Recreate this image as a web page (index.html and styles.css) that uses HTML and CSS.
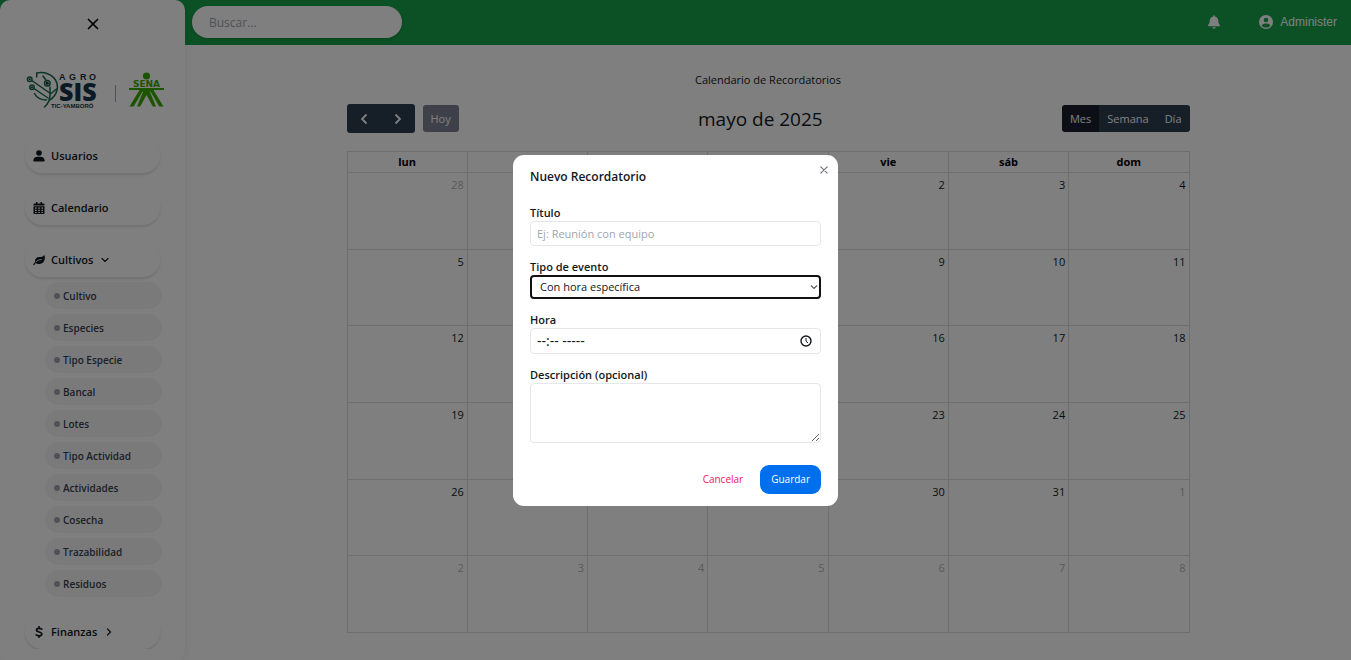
FILE: index.html
```html
<!DOCTYPE html>
<html lang="es">
<head>
<meta charset="utf-8">
<meta name="viewport" content="width=device-width, initial-scale=1">
<title>Calendario de Recordatorios</title>
<link rel="stylesheet" href="styles.css">
</head>
<body>
<div class="app">
  <header class="topbar">
    <input class="search" type="text" placeholder="Buscar..." aria-label="Buscar">
    <div class="account">
      <button class="icon-btn" type="button" aria-label="Notificaciones">
        <svg width="12" height="14" viewBox="0 0 448 512" fill="currentColor"><path d="M224 0c-17.700 0-32 14.300-32 32v19.200C119 66 64 130.600 64 208v18.800c0 47-17.300 92.400-48.500 127.600l-7.400 8.300c-8.400 9.400-10.400 22.900-5.300 34.400S19.400 416 32 416h384c12.600 0 24-7.400 29.200-18.900s3.100-25-5.300-34.400l-7.400-8.300C401.300 319.200 384 273.900 384 226.800V208c0-77.400-55-142-128-156.800V32c0-17.700-14.300-32-32-32zm45.300 493.300c12-12 18.700-28.300 18.700-45.300H160c0 17 6.700 33.300 18.700 45.300S207 512 224 512s33.300-6.700 45.300-18.700z"/></svg>
      </button>
      <button class="user" type="button">
        <svg width="14" height="14" viewBox="0 0 14 14"><circle cx="7" cy="7" r="7" fill="currentColor"/><circle cx="7" cy="5" r="2.300" fill="#16a34a"/><path d="M2.600 10.400C3.700 8.900 5.300 8.500 7 8.500s3.300.400 4.400 1.900C10.300 11.900 8.700 12.600 7 12.600s-3.300-.700-4.400-2.200z" fill="#16a34a"/></svg>
        Administer
      </button>
    </div>
  </header>

  <aside class="sidebar">
    <button class="close-menu" type="button" aria-label="Cerrar menú">
      <svg width="12" height="12" viewBox="0 0 12 12" fill="none" stroke="currentColor" stroke-width="1.700" stroke-linecap="round"><path d="M1.500 1.500l9 9M10.500 1.500l-9 9"/></svg>
    </button>
    <div class="brand">
      <svg width="72" height="40" viewBox="0 0 72 40" role="img" aria-label="Agro SIS TIC-Yamboró">
        <g fill="none" stroke="#15694a" stroke-width="1.500" stroke-linecap="round">
          <path d="M10.700 7V3C18 1.500 26 4 29.500 10c4 7 1.500 15-5.500 20"/>
          <path d="M8.500 23.500c2 4 6 6.500 12 6.500"/>
          <path d="M18.500 37c4-3.500 5.500-7 5.500-12V17M5.800 10.500L23 22.500M8 18.500L22 28M17 6l3.500 5M24.500 24l6-5"/>
          <circle cx="3.700" cy="9.300" r="2.300"/><circle cx="6" cy="17.300" r="2.200"/><circle cx="21.300" cy="13.300" r="2.800"/>
        </g>
        <g fill="#153347"><circle cx="3.700" cy="9.300" r="1"/><circle cx="6" cy="17.300" r="1"/><circle cx="21.300" cy="13.300" r="1.500"/></g>
        <text class="logo-small" x="33 43 54 63" y="10">AGRO</text>
        <text class="logo-big" x="33" y="31">SIS</text>
        <text class="logo-tiny" x="25" y="38">TIC-YAMBORÓ</text>
      </svg>
      <span class="brand-rule"></span>
      <svg width="36" height="36" viewBox="0 0 36 36" role="img" aria-label="SENA">
        <circle cx="17.500" cy="4" r="3.600" fill="#39a900"/>
        <path d="M0 16h35v1.900H24.500L34.500 34.500h-4.200L21.500 19.500h-.7L27 34.500h-3.200L17.500 23l-6.300 11.500H8l6.200-15h-.7L4.700 34.500H.5L10.500 17.900H0z" fill="#39a900"/>
        <text class="logo-sena" x="17.500" y="15" text-anchor="middle">SENA</text>
      </svg>
    </div>
    <nav class="menu">
      <a class="menu-item" href="#"><svg width="12" height="12" viewBox="0 0 12 12" fill="currentColor"><circle cx="6" cy="3" r="2.800"/><path d="M1 11.500c-.4 0-.7-.3-.7-.7C.3 8.300 2 6.700 4.500 6.700h3c2.500 0 4.200 1.600 4.200 4.100 0 .4-.3.700-.7.700z"/></svg>Usuarios</a>
      <a class="menu-item" href="#"><svg width="12" height="12" viewBox="0 0 12 12" fill="currentColor"><path fill-rule="evenodd" d="M3 0h1.500v1.400h3V0H9v1.400h1.500c.6 0 1 .4 1 1v1.100H.500V2.400c0-.6.400-1 1-1H3zM.500 4.200h11V11c0 .6-.4 1-1 1h-9c-.6 0-1-.4-1-1zM2 5.500v1.300h1.700V5.500zm3.200 0v1.300h1.700V5.500zm3.200 0v1.300H10V5.500zM2 7.700V9h1.700V7.700zm3.200 0V9h1.700V7.700zm3.200 0V9H10V7.700zM2 9.900v1.200h1.700V9.900zm3.200 0v1.200h1.700V9.900zm3.200 0v1.200H10V9.900z"/></svg>Calendario</a>
      <a class="menu-item" href="#"><svg width="12" height="12" viewBox="0 0 12 12"><path d="M11.400 1c.7 1.800.7 4.200-.3 6-1 2-3.300 3.300-5.600 3-1.200-.1-2-.5-2.700-1.100L1.300 11c-.5.500-1.300 0-1-.7L2 7.900C1.700 5 3.500 3 6.300 3c2 0 3.900-.2 5.100-2z" fill="currentColor"/><path d="M2.800 8C4 6.500 5.700 5.700 8.300 5.500" fill="none" stroke="#fff" stroke-width=".8" stroke-linecap="round"/></svg>Cultivos<svg class="chev" width="8" height="8" viewBox="0 0 8 8" fill="none" stroke="currentColor" stroke-width="1.200" stroke-linecap="round"><path d="M1 2.500l3 3 3-3"/></svg></a>
      <ul class="submenu">
        <li><a href="#">Cultivo</a></li>
        <li><a href="#">Especies</a></li>
        <li><a href="#">Tipo Especie</a></li>
        <li><a href="#">Bancal</a></li>
        <li><a href="#">Lotes</a></li>
        <li><a href="#">Tipo Actividad</a></li>
        <li><a href="#">Actividades</a></li>
        <li><a href="#">Cosecha</a></li>
        <li><a href="#">Trazabilidad</a></li>
        <li><a href="#">Residuos</a></li>
      </ul>
      <a class="menu-item" href="#"><svg width="12" height="12" viewBox="0 0 12 12" fill="none" stroke="currentColor" stroke-width="1.700" stroke-linecap="round"><path d="M6 .8v1.400M6 9.800v1.400M8.800 3.100C7.500 2.200 3.500 1.600 3.500 4c0 2.600 5.300 1.300 5.300 4 0 2.500-4.200 2-5.600.900"/></svg>Finanzas<svg class="chev" width="8" height="8" viewBox="0 0 8 8" fill="none" stroke="currentColor" stroke-width="1.200" stroke-linecap="round"><path d="M2.500 1l3 3-3 3"/></svg></a>
    </nav>
  </aside>

  <main class="content">
    <p class="page-title">Calendario de Recordatorios</p>
    <div class="toolbar">
      <div class="tools">
        <div class="btn-group">
          <button class="tool nav-tool" type="button" aria-label="Anterior"><svg width="10" height="12" viewBox="0 0 10 12" fill="none" stroke="currentColor" stroke-width="1.800"><path d="M7.500 1.500L3 6l4.500 4.500"/></svg></button>
          <button class="tool nav-tool" type="button" aria-label="Siguiente"><svg width="10" height="12" viewBox="0 0 10 12" fill="none" stroke="currentColor" stroke-width="1.800"><path d="M2.500 1.500L7 6l-4.500 4.500"/></svg></button>
        </div>
        <button class="tool today" type="button">Hoy</button>
      </div>
      <h2 class="month">mayo de 2025</h2>
      <div class="btn-group">
        <button class="tool active" type="button">Mes</button>
        <button class="tool" type="button">Semana</button>
        <button class="tool" type="button">Día</button>
      </div>
    </div>
    <table class="calendar">
      <thead><tr><th>lun</th><th>mar</th><th>mié</th><th>jue</th><th>vie</th><th>sáb</th><th>dom</th></tr></thead>
      <tbody>
        <tr><td class="other">28</td><td class="other">29</td><td class="other">30</td><td>1</td><td>2</td><td>3</td><td>4</td></tr>
        <tr><td>5</td><td>6</td><td>7</td><td>8</td><td>9</td><td>10</td><td>11</td></tr>
        <tr><td>12</td><td>13</td><td>14</td><td>15</td><td>16</td><td>17</td><td>18</td></tr>
        <tr><td>19</td><td>20</td><td>21</td><td>22</td><td>23</td><td>24</td><td>25</td></tr>
        <tr><td>26</td><td>27</td><td>28</td><td>29</td><td>30</td><td>31</td><td class="other">1</td></tr>
        <tr><td class="other">2</td><td class="other">3</td><td class="other">4</td><td class="other">5</td><td class="other">6</td><td class="other">7</td><td class="other">8</td></tr>
      </tbody>
    </table>
  </main>
</div>

<div class="overlay">
  <form class="modal" role="dialog" aria-modal="true" aria-labelledby="modal-title">
    <button class="modal-close" type="button" aria-label="Cerrar"><svg width="8" height="8" viewBox="0 0 8 8" fill="none" stroke="currentColor" stroke-width="1.100" stroke-linecap="round"><path d="M.800.800l6.400 6.400M7.200.800L.800 7.200"/></svg></button>
    <h3 class="modal-title" id="modal-title">Nuevo Recordatorio</h3>
    <div class="field">
      <label for="titulo">Título</label>
      <input class="control" id="titulo" type="text" placeholder="Ej: Reunión con equipo">
    </div>
    <div class="field">
      <label for="tipo">Tipo de evento</label>
      <div class="select-wrap">
        <select class="control select" id="tipo"><option>Con hora específica</option><option>Todo el día</option></select>
        <svg class="select-arrow" width="8" height="8" viewBox="0 0 8 8" fill="none" stroke="currentColor" stroke-width="1.100"><path d="M1 2.500l3 3 3-3"/></svg>
      </div>
    </div>
    <div class="field">
      <label for="hora">Hora</label>
      <div class="control time">
        <input class="time-input" id="hora" type="text" placeholder="--:-- -----">
        <button class="clock" type="button" aria-label="Elegir hora"><svg width="12" height="12" viewBox="0 0 12 12" fill="none" stroke="currentColor" stroke-width="1.400"><circle cx="6" cy="6" r="5"/><path d="M6 3v3.200l2 1.800" stroke-width="1"/></svg></button>
      </div>
    </div>
    <div class="field">
      <label for="descripcion">Descripción (opcional)</label>
      <textarea class="control area" id="descripcion"></textarea>
    </div>
    <div class="actions">
      <button class="cancel" type="button">Cancelar</button>
      <button class="save" type="submit">Guardar</button>
    </div>
  </form>
</div>
</body>
</html>
```

FILE: styles.css
```css
* { box-sizing: border-box; }

body {
  margin: 0;
  background: #fff;
  color: #11181c;
  font-family: "Open Sans", "Noto Sans", sans-serif;
  font-size: 11px;
  line-height: 16px;
}

button, input, select, textarea { font: inherit; color: inherit; }
button { border: 0; padding: 0; background: none; cursor: pointer; }
svg { display: block; flex: none; }

.app {
  display: grid;
  grid-template-columns: 185px 1fr;
  grid-template-rows: 45px 1fr;
  height: 100vh;
  overflow: hidden;
}

.topbar {
  grid-area: 1 / 1 / 2 / 3;
  display: flex;
  align-items: center;
  justify-content: space-between;
  padding: 0 14px 1px 192px;
  background: #16a34a;
}
.search {
  width: 210px;
  height: 32px;
  padding: 0 17px;
  border: 0;
  border-radius: 16px;
  background: #fff;
  box-shadow: 0 1px 3px rgba(0, 0, 0, .2);
  font-size: 12px;
}
.search::placeholder { color: #9ca3af; opacity: 1; }
.account { display: flex; align-items: center; gap: 39px; color: #fff; }
.user {
  display: flex;
  align-items: center;
  gap: 7px;
  font-family: "Liberation Sans", Arial, sans-serif;
  font-size: 12px;
}

.sidebar {
  grid-area: 1 / 1 / 3 / 2;
  z-index: 1;
  display: flex;
  flex-direction: column;
  min-height: 0;
  padding: 18px 0 11px;
  border-radius: 10px;
  background: #fff;
  box-shadow: 2px 0 8px rgba(0, 0, 0, .06);
}
.close-menu { align-self: center; color: #000; }
.brand {
  display: flex;
  align-items: center;
  justify-content: space-between;
  margin: 40px 20px 28px 26px;
}
.brand-rule { flex: none; width: 1px; height: 17px; margin: 6px 0 0 4px; background: #9ca3af; }
.logo-small { font: bold 9px "Liberation Sans", sans-serif; fill: #153347; }
.logo-big { font: 800 25px "Open Sans", sans-serif; fill: #153347; }
.logo-tiny { font: bold 6px "Liberation Sans", sans-serif; fill: #153347; }
.logo-sena { font: bold 9px "DejaVu Sans", sans-serif; fill: #39a900; }

.menu {
  flex: 1;
  min-height: 0;
  overflow: hidden;
  padding: 0 25px;
}
.menu a { color: inherit; text-decoration: none; }
.menu-item {
  display: flex;
  align-items: center;
  gap: 6px;
  height: 35px;
  margin-bottom: 17px;
  padding: 0 8px;
  border-radius: 18px;
  box-shadow: 0 2px 3px rgba(0, 0, 0, .12);
  font-weight: 600;
}
.chev { margin-left: 2px; }
.menu .submenu {
  display: grid;
  gap: 5px;
  margin: -12px -2px 17px 20px;
  padding: 0;
  list-style: none;
}
.menu .submenu a {
  display: flex;
  align-items: center;
  gap: 3px;
  height: 27px;
  padding: 0 9px;
  border-radius: 14px;
  background: #f4f4f7;
  color: #374151;
  font-size: 10px;
  font-weight: 600;
}
.submenu a::before {
  content: "";
  width: 6px;
  height: 6px;
  border-radius: 50%;
  background: #9ca3af;
}

.content {
  grid-area: 2 / 2 / 3 / 3;
  width: 100%;
  max-width: 843px;
  margin: 0 auto;
  padding-top: 27px;
}
.page-title { margin: 0; text-align: center; }
.toolbar {
  display: flex;
  align-items: center;
  justify-content: space-between;
  height: 29px;
  margin: 16px 0 18px;
}
.month { margin: 0; font-size: 19px; line-height: 28px; font-weight: 400; }
.tools { display: flex; align-items: center; gap: 8px; }
.btn-group { display: flex; border-radius: 3px; overflow: hidden; }
.tool {
  height: 27px;
  padding: 0 8px;
  background: #2c3e50;
  color: #fff;
}
.nav-tool { display: grid; place-items: center; width: 34px; height: 29px; }
.today { border-radius: 3px; background: #7d8292; }
.active { background: #1a1e2e; }

.calendar {
  width: 100%;
  height: 482px;
  table-layout: fixed;
  border-collapse: collapse;
  color: #11181c;
}
.calendar th, .calendar td { border: 1px solid #ddd; }
.calendar th { height: 21px; padding: 2px; font-weight: 700; color: #000; }
.calendar td { padding: 4px 3px; text-align: right; vertical-align: top; }
.calendar .other { color: #b4b6b8; }

.overlay {
  position: fixed;
  inset: 0;
  z-index: 2;
  display: grid;
  place-items: center;
  background: rgba(0, 0, 0, .5);
}
.modal {
  position: relative;
  width: 325px;
  padding: 13px 17px 12px;
  border-radius: 11px;
  background: #fff;
}
.modal-close { position: absolute; top: 11px; right: 10px; color: #71717a; }
.modal-title { margin: 0 0 19px; font-size: 12px; line-height: 18px; font-weight: 600; }
.field { display: grid; margin-bottom: 13px; }
.field label { font-weight: 600; }
.control {
  width: 100%;
  height: 25px;
  padding: 0 6px;
  border: 1px solid #e5e7eb;
  border-radius: 4px;
  background: #fff;
}
.control::placeholder { color: #a1a5b0; opacity: 1; }
.select-wrap { display: grid; align-items: center; }
.select-wrap > * { grid-area: 1 / 1; }
.select {
  appearance: none;
  height: 24px;
  padding: 0 8px;
  border: 2px solid #111;
}
.select-arrow { justify-self: end; margin-right: 3px; color: #555; }
.time { display: flex; align-items: center; height: 26px; padding-right: 8px; }
.time-input { flex: 1; min-width: 0; padding: 0; border: 0; outline: 0; background: none; font-size: 14px; }
.time-input::placeholder { color: #11181c; opacity: 1; }
.area { display: block; height: 60px; resize: vertical; }
.actions {
  display: flex;
  justify-content: flex-end;
  gap: 17px;
  padding-top: 9px;
  font-size: 10px;
}
.cancel { color: #f31260; }
.save { height: 29px; padding: 0 11px; border-radius: 9px; background: #006fee; color: #fff; }
```
